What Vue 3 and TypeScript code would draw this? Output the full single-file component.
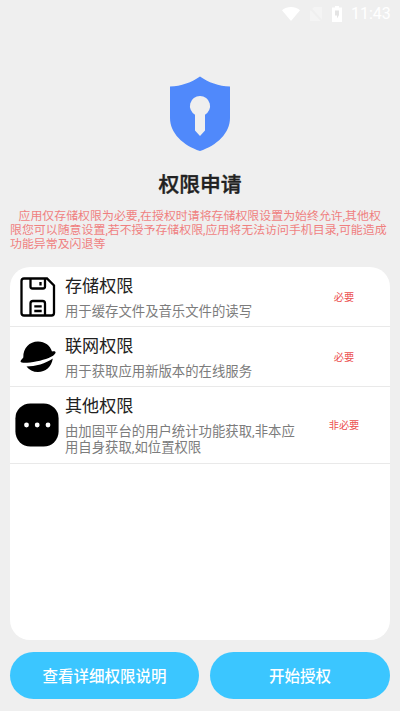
<script setup lang="ts">
interface Permission {
  icon: 'disk' | 'planet' | 'more'
  name: string
  lines: string[]
  tag: string
}

const notice: string[] = [
  '应用仅存储权限为必要,在授权时请将存储权限设置为始终允许,其他权',
  '限您可以随意设置,若不授予存储权限,应用将无法访问手机目录,可能造成',
  '功能异常及闪退等',
]

const permissions: Permission[] = [
  { icon: 'disk', name: '存储权限', lines: ['用于缓存文件及音乐文件的读写'], tag: '必要' },
  { icon: 'planet', name: '联网权限', lines: ['用于获取应用新版本的在线服务'], tag: '必要' },
  { icon: 'more', name: '其他权限', lines: ['由加固平台的用户统计功能获取,非本应', '用自身获取,如位置权限'], tag: '非必要' },
]
</script>

<template>
  <main class="screen">
    <header class="status">
      <svg class="wifi" viewBox="0 0 18 14"><path d="M0 3.2C5.2-1 12.8-1 18 3.2L9 14Z" /></svg>
      <svg class="sim" viewBox="0 0 12 14"><path d="M4 0h8v14H0V4Z" /><path class="slash" d="M0 1l12 13" /></svg>
      <svg class="battery" viewBox="0 0 10 16"><path d="M3 0h4v1.600h3V16H0V1.600h3Z" /><path class="bolt" d="M3 4.500h4v4.500L5 12.500V9.500H3Z" /></svg>
      <span class="clock">11:43</span>
    </header>

    <svg class="shield" viewBox="0 0 60 76">
      <path fill="#5089fb" d="M30 .5C22 6.400 11 10.200 0 10.500V42C0 57 13 69.500 30 75 47 69.500 60 57 60 42V10.500C49 10.200 38 6.400 30 .5Z" />
      <path fill="#efefef" d="M30 20a10 10 0 0 1 5 18.700V54.500L30 60l-5-5.500V38.700A10 10 0 0 1 30 20Z" />
    </svg>
    <h1 class="title">权限申请</h1>
    <p class="notice"><span v-for="line in notice" :key="line">{{ line }}</span></p>

    <section class="card">
      <article v-for="item in permissions" :key="item.name" class="row">
        <div class="icon">
          <svg v-if="item.icon === 'disk'" width="36" height="40" viewBox="0 0 36 40" fill="none" stroke="#000" stroke-width="2.300">
            <path d="M4 1.500H27L34 8.500V36Q34 38.500 31.500 38.500H4Q1.500 38.500 1.500 36V4Q1.500 1.500 4 1.500Z" />
            <path d="M10.500 1.500V9.500Q10.500 11.500 12.500 11.500H23Q25 11.500 25 9.500V1.500M10.500 38.500V26.500Q10.500 24 13 24H22.500Q25 24 25 26.500V38.500" />
            <path d="M20.500 5V8.500M14.300 29.300H21.700M14.300 34H21.700" />
          </svg>
          <svg v-else-if="item.icon === 'planet'" width="36" height="32" viewBox="0 0 36 32">
            <path d="M3.300 16.500C3 7 9.500 .5 18 .5 25 .5 30.300 4.800 32 10.600 34.500 10 36 10.600 35.500 12 34 15.700 25 18.700 17 20.300 8 22 1.500 22.500.6 20.700 .3 19.700 1.500 18.700 3.300 16.500Z" />
            <path d="M6.500 25.500C15 25.500 26 22.500 32.800 17.500 31.500 26 25.500 31 18 31 13 31 9 29 6.500 25.500Z" />
          </svg>
          <svg v-else class="more" width="44" height="44" viewBox="0 0 44 44">
            <rect x=".4" y=".4" width="43.200" height="43.200" rx="15" />
            <g fill="#fff"><circle cx="11.500" cy="22" r="2.400" /><circle cx="22.200" cy="22" r="2.400" /><circle cx="33" cy="22" r="2.400" /></g>
          </svg>
        </div>
        <div class="text">
          <h2>{{ item.name }}</h2>
          <p><span v-for="line in item.lines" :key="line">{{ line }}</span></p>
        </div>
        <span class="tag">{{ item.tag }}</span>
      </article>
    </section>

    <footer class="actions">
      <button type="button">查看详细权限说明</button>
      <button type="button">开始授权</button>
    </footer>
  </main>
</template>

<style>
body {
  background: #efefef;
}
</style>

<style scoped>
.screen {
  box-sizing: border-box;
  width: 400px;
  height: 711px;
  padding: 0 10px 12px;
  display: flex;
  flex-direction: column;
  overflow: hidden;
  background: #efefef;
  font-family: Roboto, "Noto Sans CJK SC", sans-serif;
}
h1, h2, p {
  margin: 0;
  white-space: nowrap;
}
.status {
  height: 27px;
  display: flex;
  align-items: center;
  justify-content: flex-end;
  flex: none;
  margin-right: -1px;
  fill: #fff;
}
.wifi {
  width: 18px;
  height: 14px;
}
.sim {
  width: 12px;
  height: 14px;
  margin-left: 10px;
  opacity: 0.35;
}
.slash {
  stroke: #efefef;
  stroke-width: 2;
}
.battery {
  width: 10px;
  height: 16px;
  margin-left: 10px;
}
.bolt {
  fill: #e4e4e4;
}
.clock {
  width: 40px;
  margin-left: 9px;
  color: #fff;
  font-size: 16px;
  line-height: 27px;
  white-space: nowrap;
}
.shield {
  flex: none;
  align-self: center;
  width: 60px;
  height: 76px;
  margin-top: 49px;
}
.title {
  height: 30px;
  margin-top: 18px;
  color: #212121;
  font-size: 20.800px;
  font-weight: 500;
  line-height: 30px;
  text-align: center;
  -webkit-text-stroke: 0.400px #212121;
}
.notice {
  height: 42px;
  margin-top: 9px;
  color: #ef7f7f;
  font-size: 11.930px;
  line-height: 14px;
}
.notice span,
.text p span {
  display: block;
}
.notice span:first-child {
  padding-left: 8.500px;
}
.card {
  flex: none;
  height: 373px;
  margin-top: 16px;
  border-radius: 20px;
  overflow: hidden;
  background: #fff;
}
.row {
  box-sizing: border-box;
  display: grid;
  grid-template-columns: 55px 234px 90px;
  align-items: center;
  height: 60px;
  border-bottom: 1px solid #e9e9e9;
}
.row:last-child {
  height: 77px;
}
.icon {
  display: flex;
  justify-content: center;
}
.more {
  margin-right: 1px;
}
.text {
  align-self: start;
}
.text h2 {
  height: 26px;
  padding-top: 6px;
  color: #212121;
  font-size: 17.100px;
  font-weight: 400;
  line-height: 26px;
}
.text p {
  margin-top: 5px;
  color: #7c7c7c;
  font-size: 13.370px;
  line-height: 16px;
}
.tag {
  padding-top: 2px;
  color: #ec5050;
  font-size: 10.200px;
  line-height: 14px;
  text-align: center;
}
.actions {
  display: grid;
  grid-template-columns: 189px 180px;
  gap: 11px;
  margin-top: 12px;
}
.actions button {
  height: 47px;
  padding: 0 0 1px;
  border: 0;
  border-radius: 24px;
  background: #3bc6ff;
  color: #fff;
  font-family: inherit;
  font-size: 15.500px;
  font-weight: 500;
}
</style>
